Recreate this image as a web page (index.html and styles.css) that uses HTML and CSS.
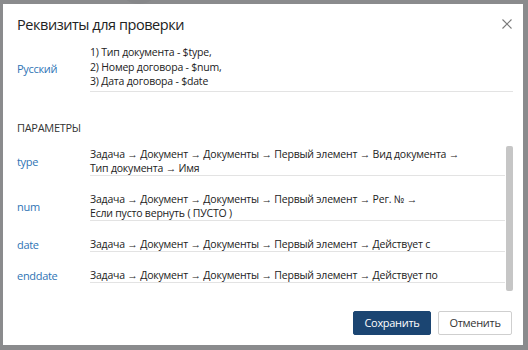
FILE: index.html
```html
<!DOCTYPE html>
<html lang="ru">
<head>
    <meta charset="UTF-8">
    <meta name="viewport" content="width=device-width, initial-scale=1.0">
    <title>Реквизиты для проверки</title>
    <link rel="stylesheet" href="styles.css">
</head>
<body>
    <div class="status-dot"></div>
    <div class="overlay"></div>

    <div class="modal">
        <div class="modal-header">
            <h1>Реквизиты для проверки</h1>
            <button class="close-btn" aria-label="Закрыть">
                <svg width="10" height="10" viewBox="0 0 10 10">
                    <path d="M0.5 0.5 L9.5 9.5 M9.5 0.5 L0.5 9.5" stroke="#7a7a7a" stroke-width="1.1" fill="none"/>
                </svg>
            </button>
        </div>

        <div class="field-row lang-row">
            <div class="field-label">Русский</div>
            <div class="field-value">
                1) Тип документа - $type,<br>
                2) Номер договора - $num,<br>
                3) Дата договора - $date
            </div>
        </div>

        <div class="section-title">ПАРАМЕТРЫ</div>

        <div class="params">
            <div class="params-list">
                <div class="field-row param-row first">
                    <div class="field-label">type</div>
                    <div class="field-value">Задача → Документ → Документы → Первый элемент → Вид документа →<br>Тип документа → Имя</div>
                </div>
                <div class="field-row param-row">
                    <div class="field-label">num</div>
                    <div class="field-value">Задача → Документ → Документы → Первый элемент → Рег. № →<br>Если пусто вернуть ( ПУСТО )</div>
                </div>
                <div class="field-row param-row">
                    <div class="field-label">date</div>
                    <div class="field-value">Задача → Документ → Документы → Первый элемент → Действует с</div>
                </div>
                <div class="field-row param-row">
                    <div class="field-label">enddate</div>
                    <div class="field-value">Задача → Документ → Документы → Первый элемент → Действует по</div>
                </div>
            </div>
            <div class="scrollbar"><div class="scroll-thumb"></div></div>
        </div>

        <div class="modal-footer">
            <button class="btn btn-primary">Сохранить</button>
            <button class="btn btn-default">Отменить</button>
        </div>
    </div>
</body>
</html>
```
FILE: styles.css
```css
body {
    margin: 0;
    height: 350px;
    overflow: hidden;
    background-color: #f0f0f0;
    font-family: "Open Sans", "Noto Sans", sans-serif;
    letter-spacing: -0.3px;
    color: #2b2b2b;
    position: relative;
}

.status-dot {
    position: absolute;
    top: -40px;
    left: 117px;
    width: 28px;
    height: 28px;
    border-radius: 50%;
    background-color: #4c9a38;
    border: 8px solid #e2e2e2;
}

.overlay {
    position: absolute;
    inset: 0;
    background-color: rgba(90, 92, 95, 0.68);
}

.modal {
    position: relative;
    margin: 4px 0 0 3px;
    width: 520px;
    height: 341px;
    box-sizing: border-box;
    padding: 0 10px 0 14px;
    background-color: white;
    display: flex;
    flex-direction: column;
}

.modal-header {
    display: flex;
    justify-content: space-between;
    align-items: center;
    height: 38px;
    padding-top: 1px;
}

h1 {
    margin: 0;
    font-size: 14.5px;
    letter-spacing: -0.45px;
    font-weight: 400;
    color: #222;
}

.close-btn {
    border: none;
    background: none;
    padding: 0;
    margin-right: 1px;
    cursor: pointer;
    display: flex;
}

.field-row {
    display: flex;
    align-items: center;
}

.field-label {
    width: 73px;
    flex-shrink: 0;
    font-size: 11px;
    color: #2f74b5;
}

.field-value {
    flex: 1;
    font-size: 10.5px;
    line-height: 14px;
    letter-spacing: -0.2px;
    color: #222;
    border-bottom: 1px solid #e3e3e3;
}

.lang-row {
    margin-top: 2px;
}

.lang-row .field-value {
    line-height: 14.5px;
    padding-bottom: 2px;
}

.section-title {
    margin-top: 29px;
    font-size: 11px;
    line-height: 14px;
    color: #333;
}

.params {
    display: flex;
    margin-top: 7px;
    height: 151px;
}

.params-list {
    flex: 1;
}

.param-row {
    padding-top: 16px;
}

.param-row.first {
    padding-top: 5px;
}

.scrollbar {
    width: 7px;
    margin-left: 1px;
    padding-top: 4px;
    box-sizing: border-box;
}

.scroll-thumb {
    height: 145px;
    background-color: #c6c6c6;
    border-radius: 2px;
}

.modal-footer {
    display: flex;
    justify-content: flex-end;
    gap: 7px;
    margin-top: 18px;
    padding-right: 1px;
}

.btn {
    height: 24px;
    padding: 0;
    font-family: "Open Sans", "Noto Sans", sans-serif;
    font-size: 11px;
    letter-spacing: -0.3px;
    border-radius: 2px;
    cursor: pointer;
}

.btn-primary {
    width: 78px;
    background-color: #1b4572;
    border: 1px solid #1b4572;
    color: white;
}

.btn-default {
    width: 74px;
    background-color: white;
    border: 1px solid #cfcfcf;
    color: #333;
}
```
